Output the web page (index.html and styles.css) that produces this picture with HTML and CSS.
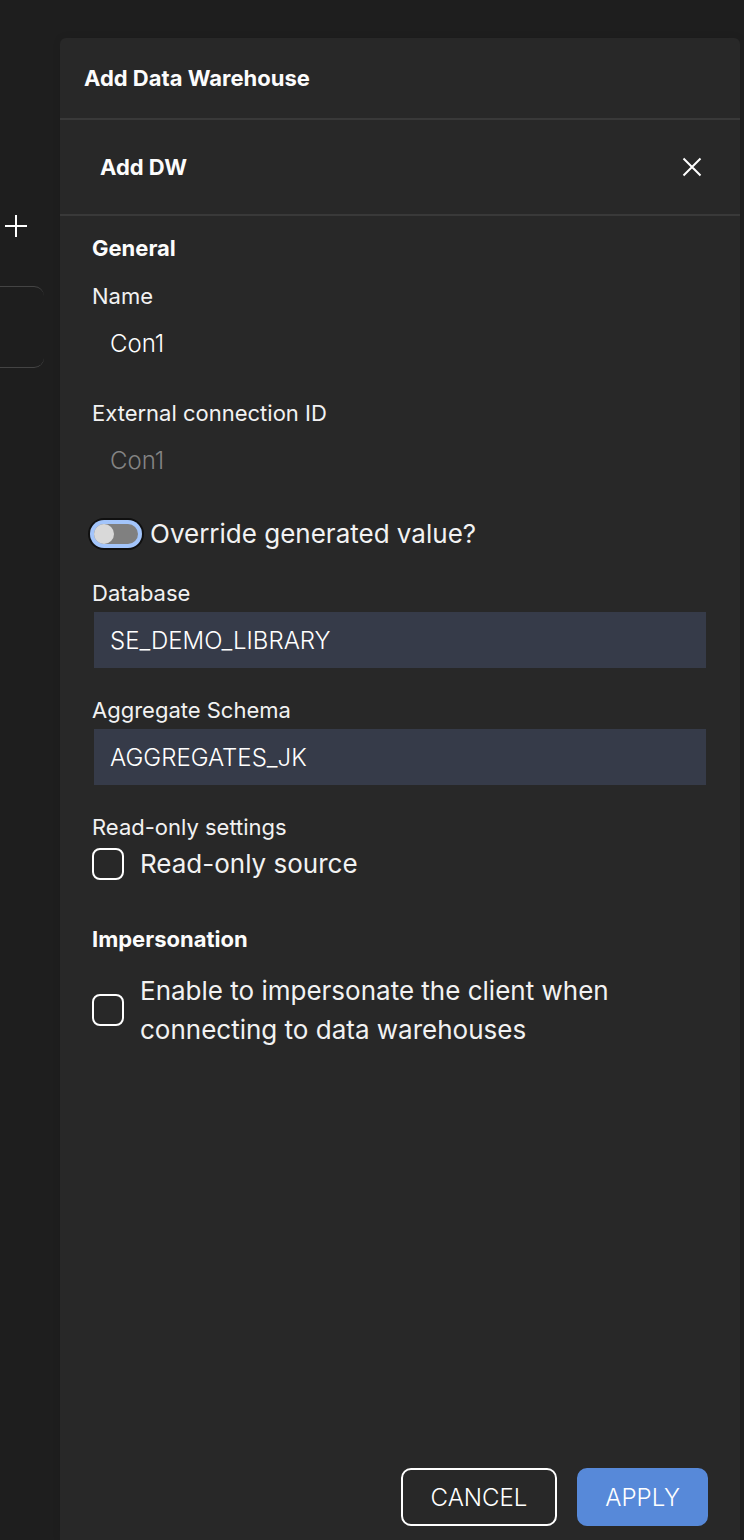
FILE: index.html
```html
<!DOCTYPE html>
<html lang="en">
<head>
<meta charset="utf-8">
<meta name="viewport" content="width=device-width, initial-scale=1">
<title>Add Data Warehouse</title>
<link rel="stylesheet" href="styles.css">
</head>
<body>
<div class="page">
  <aside class="rail">
    <button class="icon-button rail-add" type="button" aria-label="Add">
      <svg width="22" height="22" viewBox="0 0 22 22" fill="none" stroke="currentColor" stroke-width="2"><path d="M11 0v22M0 11h22"/></svg>
    </button>
    <div class="rail-card"></div>
  </aside>
  <main class="panel">
    <header class="panel-header"><h1 class="heading">Add Data Warehouse</h1></header>
    <div class="panel-subheader">
      <h2 class="heading">Add DW</h2>
      <button class="icon-button" type="button" aria-label="Close">
        <svg width="20" height="20" viewBox="0 0 20 20" fill="none" stroke="currentColor" stroke-width="2"><path d="M1.500 1.500l17 17M18.500 1.500l-17 17"/></svg>
      </button>
    </div>
    <form class="form">
      <section class="section">
        <h3 class="heading">General</h3>
        <div class="fields">
          <div class="field">
            <label class="label" for="name">Name</label>
            <input class="input" id="name" type="text" value="Con1">
          </div>
          <div class="field">
            <label class="label" for="external-id">External connection ID</label>
            <input class="input" id="external-id" type="text" value="Con1" disabled>
          </div>
          <label class="switch-row">
            <input class="switch" type="checkbox" role="switch">
            <span>Override generated value?</span>
          </label>
          <div class="field">
            <label class="label" for="database">Database</label>
            <input class="input input-filled" id="database" type="text" value="SE_DEMO_LIBRARY">
          </div>
          <div class="field">
            <label class="label" for="schema">Aggregate Schema</label>
            <input class="input input-filled" id="schema" type="text" value="AGGREGATES_JK">
          </div>
          <div class="field" role="group" aria-labelledby="readonly-label">
            <span class="label" id="readonly-label">Read-only settings</span>
            <label class="check-row">
              <input class="check" type="checkbox">
              <span>Read-only source</span>
            </label>
          </div>
        </div>
      </section>
      <section class="section">
        <h3 class="heading">Impersonation</h3>
        <label class="check-row">
          <input class="check" type="checkbox">
          <span>Enable to impersonate the client when connecting to data warehouses</span>
        </label>
      </section>
      <footer class="actions">
        <button class="button button-outline" type="button">CANCEL</button>
        <button class="button button-primary" type="submit">APPLY</button>
      </footer>
    </form>
  </main>
</div>
</body>
</html>
```
FILE: styles.css
```css
* { box-sizing: border-box; }

body {
  margin: 0;
  background: #1e1e1e;
  color: #f2f2f2;
  font-family: Inter, "Liberation Sans", sans-serif;
  font-size: 26px;
  font-weight: 400;
  line-height: 39px;
}

.page {
  display: grid;
  grid-template-columns: 60px 1fr;
  min-height: 100vh;
  padding: 38px 4px 0 0;
}

.rail { padding-top: 177px; }
.rail-add { margin-left: 5px; }
.rail-card {
  height: 82px;
  margin: 49px 16px 0 0;
  border: 1px solid #444;
  border-width: 1px 0;
  border-radius: 0 10px 10px 0;
}

.icon-button {
  display: block;
  padding: 0;
  border: 0;
  background: none;
  color: #fff;
  cursor: pointer;
}
.icon-button svg { display: block; }

.panel {
  display: flex;
  flex-direction: column;
  background: #282828;
  border-radius: 6px 6px 0 0;
  box-shadow: 0 0 8px rgba(0, 0, 0, .08);
}

.panel-header {
  padding: 24px;
  border-bottom: 2px solid #393939;
}

.panel-subheader {
  display: flex;
  align-items: center;
  justify-content: space-between;
  padding: 31px 38px 31px 40px;
  border-bottom: 2px solid #393939;
}

.heading {
  margin: 0;
  color: #fcfcfc;
  font-size: 22px;
  font-weight: 700;
  line-height: 32px;
}

.form {
  display: flex;
  flex: 1;
  flex-direction: column;
  gap: 40px;
  padding: 16px 32px 14px;
}

.section {
  display: flex;
  flex-direction: column;
  gap: 16px;
}

.fields {
  display: flex;
  flex-direction: column;
  gap: 24px;
}

.field {
  display: flex;
  flex-direction: column;
}

.label {
  font-size: 22px;
  line-height: 33px;
}

.input {
  width: 100%;
  height: 60px;
  padding: 0 16px;
  border: 2px solid transparent;
  background: transparent;
  background-clip: padding-box;
  color: #fff;
  font: inherit;
  font-size: 24px;
  font-weight: 300;
}
.input:disabled { color: #848484; }
.input-filled { background-color: #363b49; }

.switch-row {
  display: flex;
  align-items: center;
  gap: 12px;
  padding-left: 2px;
}

.switch {
  display: flex;
  flex: none;
  width: 44px;
  height: 20px;
  margin: 0;
  appearance: none;
  border-radius: 10px;
  background: #808080;
  box-shadow: 0 0 0 4px #a3c5fb, 0 0 0 6px #101010;
}
.switch::before {
  content: "";
  width: 20px;
  height: 20px;
  border-radius: 50%;
  background: #d9d9d9;
}
.switch:checked { justify-content: flex-end; }

.check-row {
  display: flex;
  align-items: center;
  gap: 16px;
}

.check {
  flex: none;
  width: 32px;
  height: 32px;
  margin: 0;
  appearance: none;
  border: 2px solid #fff;
  border-radius: 8px;
}
.check:checked { background: #5789d9; }

.actions {
  display: flex;
  justify-content: flex-end;
  gap: 20px;
  margin-top: auto;
}

.button {
  height: 58px;
  padding: 0 26px;
  border: 2px solid #fff;
  border-radius: 10px;
  background: transparent;
  color: #fff;
  font: inherit;
  font-size: 24px;
  font-weight: 300;
  cursor: pointer;
}
.button-outline { padding: 0 28px; }
.button-primary {
  border-color: #5789d9;
  background: #5789d9;
}
```
